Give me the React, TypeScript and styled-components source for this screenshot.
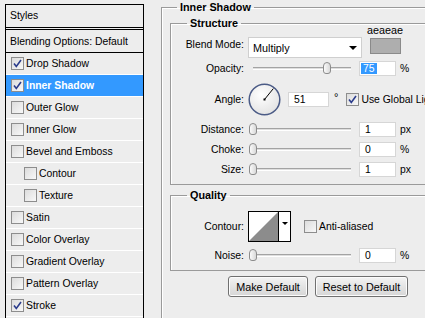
import React from "react";
import styled, { createGlobalStyle } from "styled-components";

const Global = createGlobalStyle`
  html, body { margin: 0; padding: 0; background: #ededed; overflow: hidden; }
  body { font-family: "Liberation Sans", Arial, sans-serif; font-size: 10.4px; color: #000; }
  * { box-sizing: border-box; }
`;

const Root = styled.div`
  width: 425px;
  height: 318px;
  overflow: hidden;
  display: flex;
  align-items: flex-start;
  padding-left: 5px;
  background: #ededed;
`;

/* ---------- left styles list ---------- */
const Panel = styled.div`
  width: 139px;
  height: 400px;
  margin-top: 4px;
  flex-shrink: 0;
  border: 1px solid #000;
  border-bottom: none;
  display: flex;
  flex-direction: column;
`;

const Header = styled.div`
  height: 23px;
  line-height: 22px;
  padding-left: 4px;
  border-bottom: 1px solid #000;
  margin-bottom: 1px;
`;

const Blending = styled.div`
  height: 24px;
  line-height: 23px;
  padding-left: 4px;
  border-top: 1px solid #000;
  border-bottom: 1px solid #000;
`;

const Item = styled.div<{ $indent?: boolean; $selected?: boolean }>`
  height: 22px;
  border-bottom: 1px solid #fff;
  display: flex;
  align-items: center;
  gap: 2px;
  padding-left: ${(p) => (p.$indent ? 18 : 5)}px;
  padding-bottom: 1px;
  background: ${(p) => (p.$selected ? "#3399ff" : "transparent")};
  color: ${(p) => (p.$selected ? "#fff" : "#000")};
  font-weight: ${(p) => (p.$selected ? "bold" : "normal")};
`;

const Box = styled.span`
  width: 13px;
  height: 13px;
  flex-shrink: 0;
  border: 1px solid #8d8d8d;
  background: linear-gradient(135deg, #dcdcdc, #f8f8f8);
  display: inline-flex;
  align-items: center;
  justify-content: center;
`;

const Check: React.FC<{ on?: boolean }> = ({ on }) => (
  <Box>
    {on && (
      <svg width="11" height="11" viewBox="0 0 11 11">
        <path d="M2 5.5 L4.3 8.5 L9 2" fill="none" stroke="#2b3c8c" strokeWidth="1.6" />
      </svg>
    )}
  </Box>
);

/* ---------- right side ---------- */
const Outer = styled.fieldset`
  margin: 0 0 0 17px;
  padding: 2px 8px 60px 8px;
  border: 1px solid #9a9a9a;
  box-shadow: inset 1px 1px 0 #fff;
  width: 300px;
  min-width: 0;
  flex-shrink: 0;
`;

const Legend = styled.legend<{ $ml: number }>`
  margin-left: ${(p) => p.$ml}px;
  padding: 0 3px;
  font-weight: bold;
  line-height: 14px;
  font-size: 10.8px;
`;

const Group = styled.fieldset<{ $mt?: number }>`
  margin: ${(p) => p.$mt ?? 0}px 0 0 0;
  padding: 0 8px 7px 0;
  border: 1px solid #9a9a9a;
  box-shadow: inset 1px 1px 0 #fff;
  min-width: 0;
`;

const Row = styled.div<{ $mt: number; $h: number; $end?: boolean }>`
  display: flex;
  align-items: ${(p) => (p.$end ? "flex-end" : "center")};
  margin-top: ${(p) => p.$mt}px;
  height: ${(p) => p.$h}px;
`;

const Label = styled.span`
  width: 73px;
  margin-right: 4px;
  text-align: right;
  white-space: nowrap;
  flex-shrink: 0;
  align-self: center;
`;

const Select = styled.div`
  width: 114px;
  height: 21px;
  background: #fff;
  border: 1px solid #cfcfcf;
  display: flex;
  align-items: center;
  justify-content: space-between;
  padding: 0 4px 0 4px;
  font-size: 10.8px;
`;

const Arrow = styled.span`
  width: 0;
  height: 0;
  border-left: 4px solid transparent;
  border-right: 4px solid transparent;
  border-top: 4px solid #000;
`;

const SwatchCol = styled.div`
  margin-left: 5px;
  display: flex;
  flex-direction: column;
  align-items: center;
  gap: 2px;
  padding-bottom: 4px;
`;

const Hex = styled.span`
  line-height: 12px;
  font-size: 10.8px;
`;

const Swatch = styled.div`
  width: 31px;
  height: 16px;
  background: #aeaeae;
  border: 1px solid #8a8a8a;
`;

const SliderBox = styled.div`
  position: relative;
  width: 106px;
  height: 15px;
  display: flex;
  align-items: center;
  flex-shrink: 0;
`;

const Track = styled.div`
  margin: 0 3px 0 5px;
  flex: 1;
  height: 3px;
  border-top: 1px solid #a3a3a3;
  border-bottom: 1px solid #fff;
  background: #dedede;
`;

const Thumb = styled.div`
  position: absolute;
  top: 1px;
  width: 8px;
  height: 12px;
  border: 1px solid #8c8c8c;
  border-radius: 4px 4px 3px 3px;
  background: linear-gradient(90deg, #fafafa, #d9d9d9);
`;

const Num = styled.div<{ $w?: number }>`
  width: ${(p) => p.$w ?? 37}px;
  height: 15px;
  margin-left: 5px;
  background: #fff;
  border: 1px solid #d6d6d6;
  line-height: 13px;
  padding-left: 5px;
  flex-shrink: 0;
  white-space: nowrap;
`;

const Sel = styled.span`
  background: #3399ff;
  color: #fff;
  margin-left: -4px;
  padding: 0 2px;
`;

const Unit = styled.span`
  margin-left: 4px;
`;

const Dial = styled.svg`
  flex-shrink: 0;
`;

const Degree = styled.span`
  margin-left: 5px;
  margin-top: -5px;
  font-size: 11px;
`;

const CheckLabel = styled.span<{ $ml: number }>`
  display: flex;
  align-items: center;
  gap: 2px;
  margin-left: ${(p) => p.$ml}px;
  white-space: nowrap;
`;

const Contour = styled.div`
  width: 43px;
  height: 31px;
  border: 1px solid #000;
  background: #fff;
  display: flex;
  flex-shrink: 0;
`;

const ContourArrow = styled.div`
  flex: 1;
  border-left: 1px solid #000;
  display: flex;
  align-items: center;
  justify-content: center;
  padding-bottom: 6px;
`;

const SmallArrow = styled.span`
  width: 0;
  height: 0;
  border-left: 3px solid transparent;
  border-right: 3px solid transparent;
  border-top: 3px solid #000;
`;

const Buttons = styled.div`
  display: flex;
  gap: 7px;
  margin-top: 5px;
  padding-left: 58px;
`;

const Button = styled.div<{ $w: number }>`
  width: ${(p) => p.$w}px;
  height: 21px;
  border: 1px solid #707070;
  border-radius: 3px;
  background: linear-gradient(#f4f4f4, #e4e4e4 50%, #d6d6d6);
  display: flex;
  align-items: center;
  justify-content: center;
  box-shadow: inset 0 0 0 1px #fcfcfc;
  font-size: 10.8px;
`;

const Slider: React.FC<{ pct: number }> = ({ pct }) => (
  <SliderBox>
    <Track />
    <Thumb style={{ left: 1 + pct * 98 }} />
  </SliderBox>
);

const items: { name: string; on?: boolean; indent?: boolean; selected?: boolean }[] = [
  { name: "Drop Shadow", on: true },
  { name: "Inner Shadow", on: true, selected: true },
  { name: "Outer Glow" },
  { name: "Inner Glow" },
  { name: "Bevel and Emboss" },
  { name: "Contour", indent: true },
  { name: "Texture", indent: true },
  { name: "Satin" },
  { name: "Color Overlay" },
  { name: "Gradient Overlay" },
  { name: "Pattern Overlay" },
  { name: "Stroke", on: true },
  { name: "" },
];

export default function App() {
  const a = (51 * Math.PI) / 180;
  return (
    <Root>
      <Global />
      <Panel>
        <Header>Styles</Header>
        <Blending>Blending Options: Default</Blending>
        {items.map((it, i) => (
          <Item key={i} $indent={it.indent} $selected={it.selected}>
            {it.name && <Check on={it.on} />}
            {it.name}
          </Item>
        ))}
      </Panel>

      <Outer>
        <Legend $ml={7}>Inner Shadow</Legend>
        <Group>
          <Legend $ml={16}>Structure</Legend>
          <Row $mt={0} $h={28} $end>
            <Label>Blend Mode:</Label>
            <Select>
              Multiply
              <Arrow />
            </Select>
            <SwatchCol>
              <Hex>aeaeae</Hex>
              <Swatch />
            </SwatchCol>
          </Row>
          <Row $mt={3} $h={15}>
            <Label>Opacity:</Label>
            <Slider pct={0.75} />
            <Num>
              <Sel>75</Sel>
            </Num>
            <Unit>%</Unit>
          </Row>
          <Row $mt={7} $h={32}>
            <Label>Angle:</Label>
            <Dial width="33" height="33" viewBox="0 0 33 33">
              <defs>
                <radialGradient id="dg" cx="0.4" cy="0.35" r="0.7">
                  <stop offset="0" stopColor="#ffffff" />
                  <stop offset="1" stopColor="#e2e2e2" />
                </radialGradient>
              </defs>
              <circle cx="16.5" cy="16.5" r="15.3" fill="url(#dg)" stroke="#4b5b86" strokeWidth="1.5" />
              <line
                x1="16.5"
                y1="16.5"
                x2={16.5 + 14 * Math.cos(a)}
                y2={16.5 - 14 * Math.sin(a)}
                stroke="#000"
                strokeWidth="1"
              />
              <rect x="15.5" y="15.5" width="2" height="2" fill="#000" />
            </Dial>
            <Num $w={41} style={{ marginLeft: 7 }}>51</Num>
            <Degree>°</Degree>
            <CheckLabel $ml={8}>
              <Check on />
              Use Global Light
            </CheckLabel>
          </Row>
          <Row $mt={7} $h={15}>
            <Label>Distance:</Label>
            <Slider pct={0} />
            <Num>1</Num>
            <Unit>px</Unit>
          </Row>
          <Row $mt={5} $h={15}>
            <Label>Choke:</Label>
            <Slider pct={0} />
            <Num>0</Num>
            <Unit>%</Unit>
          </Row>
          <Row $mt={5} $h={15}>
            <Label>Size:</Label>
            <Slider pct={0} />
            <Num>1</Num>
            <Unit>px</Unit>
          </Row>
        </Group>

        <Group $mt={3}>
          <Legend $ml={16}>Quality</Legend>
          <Row $mt={9} $h={31}>
            <Label>Contour:</Label>
            <Contour>
              <svg width="29" height="29" viewBox="0 0 29 29">
                <polygon points="0,29 29,0 29,29" fill="#8c8c8c" />
              </svg>
              <ContourArrow>
                <SmallArrow />
              </ContourArrow>
            </Contour>
            <CheckLabel $ml={13}>
              <Check />
              Anti-aliased
            </CheckLabel>
          </Row>
          <Row $mt={6} $h={15}>
            <Label>Noise:</Label>
            <Slider pct={0} />
            <Num>0</Num>
            <Unit>%</Unit>
          </Row>
        </Group>

        <Buttons>
          <Button $w={80}>Make Default</Button>
          <Button $w={93}>Reset to Default</Button>
        </Buttons>
      </Outer>
    </Root>
  );
}
